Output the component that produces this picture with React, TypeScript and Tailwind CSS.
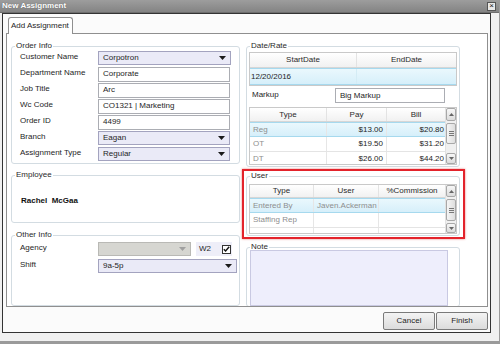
import React from "react";

const ui = "font-['Liberation_Sans',Arial,sans-serif] text-[8px] leading-[10px] text-[#1e1e1e]";

function DownArrow({ color = "#1a1a1a" }: { color?: string }) {
  return (
    <svg width="7" height="4" viewBox="0 0 7 4">
      <path d="M0 0H7L3.5 4Z" fill={color} />
    </svg>
  );
}

function SmallArrow({ up }: { up?: boolean }) {
  return (
    <svg width="5" height="3" viewBox="0 0 5 3">
      <path d={up ? "M0 3H5L2.5 0Z" : "M0 0H5L2.5 3Z"} fill="#666" />
    </svg>
  );
}

function Dropdown({ value, className }: { value: string; className: string }) {
  return (
    <div className={`${className} h-[14px] flex items-center justify-between pl-[4px] pr-[4px] bg-[#eaeaf7] border border-[#a3a3bf]`}>
      <span>{value}</span>
      <DownArrow />
    </div>
  );
}

function TextBox({ value, className }: { value: string; className: string }) {
  return (
    <div className={`${className} h-[15px] flex items-center pl-[4px] bg-white border border-[#abadb3]`}>
      <span>{value}</span>
    </div>
  );
}

function Group({ title, className, children }: { title: string; className: string; children: React.ReactNode }) {
  return (
    <fieldset className={`${className} p-0 m-0 border border-[#d3dce2] rounded-[3px] min-w-0`}>
      <legend className="ml-[3px] px-[1px] leading-[10px] text-[#2a2a2a]">{title}</legend>
      {children}
    </fieldset>
  );
}

function VScroll({ up, thumbTop, thumbH, down }: { up: number; thumbTop: number; thumbH: number; down: number }) {
  return (
    <div className="w-[11px] h-full flex flex-col bg-[#f0f0f0] border-l border-[#e2e2e2]">
      <div style={{ height: up }} className="flex items-center justify-center bg-gradient-to-b from-[#f7f7f7] to-[#dcdcdc] border border-[#a8a8a8] rounded-[2px]">
        <SmallArrow up />
      </div>
      <div className="flex-1 flex flex-col">
        <div style={{ marginTop: thumbTop, height: thumbH }} className="flex flex-col items-center justify-center gap-[1px] bg-gradient-to-r from-[#f5f5f5] to-[#dedede] border border-[#a8a8a8] rounded-[2px]">
          <div className="w-[5px] h-px bg-[#777]" />
          <div className="w-[5px] h-px bg-[#777]" />
          <div className="w-[5px] h-px bg-[#777]" />
        </div>
      </div>
      <div style={{ height: down }} className="flex items-center justify-center bg-gradient-to-b from-[#f7f7f7] to-[#dcdcdc] border border-[#a8a8a8] rounded-[2px]">
        <SmallArrow />
      </div>
    </div>
  );
}

const headCell = "flex items-center justify-center border-r border-[#e3e3e3] text-[#2a2a2a]";
const selRow = "bg-gradient-to-b from-[#eaf8fd] to-[#d6effa] border-y border-[#a6d9ee]";
const row = "bg-white border-b border-[#e4e4e4]";

function DateGrid() {
  return (
    <div className="w-[208px] border border-[#c9c9c9] bg-white">
      <div className="grid grid-cols-[107px_99px] h-[15px] border-b border-[#d6d6d6] bg-gradient-to-b from-white to-[#f1f1f1]">
        <div className={headCell}>StartDate</div>
        <div className="flex items-center justify-center text-[#2a2a2a]">EndDate</div>
      </div>
      <div className={`grid grid-cols-[107px_99px] h-[17px] ${selRow}`}>
        <div className="flex items-center pl-[1px] border-r border-[#d4ecf5]">12/20/2016</div>
        <div />
      </div>
    </div>
  );
}

function RateGrid() {
  const rows = [
    ["Reg", "$13.00", "$20.80"],
    ["OT", "$19.50", "$31.20"],
    ["DT", "$26.00", "$44.20"],
  ];
  return (
    <div className="w-[208px] h-[58px] border border-[#c9c9c9] bg-white flex overflow-hidden">
      <div className="w-[195px] flex flex-col">
        <div className="grid grid-cols-[77px_60px_58px] h-[14px] shrink-0 border-b border-[#d6d6d6] bg-gradient-to-b from-white to-[#f1f1f1]">
          <div className={headCell}>Type</div>
          <div className={headCell}>Pay</div>
          <div className="flex items-center justify-center text-[#2a2a2a]">Bill</div>
        </div>
        {rows.map((r, i) => (
          <div key={r[0]} className={`grid grid-cols-[77px_60px_58px] h-[15px] shrink-0 ${i === 0 ? selRow : row}`}>
            <div className="flex items-center pl-[3px] text-[#8e8e8e] border-r border-[#e6e6e6]">{r[0]}</div>
            <div className="flex items-center justify-end pr-[3px] border-r border-[#e6e6e6]">{r[1]}</div>
            <div className="flex items-center justify-end pr-[1px]">{r[2]}</div>
          </div>
        ))}
      </div>
      <VScroll up={13} thumbTop={2} thumbH={21} down={11} />
    </div>
  );
}

function UserGrid() {
  const rows = [
    ["Entered By", "Javen.Ackerman"],
    ["Staffing Rep", ""],
    ["", ""],
  ];
  return (
    <div className="w-[208px] h-[50px] border border-[#c9c9c9] bg-white flex overflow-hidden">
      <div className="w-[195px] flex flex-col">
        <div className="grid grid-cols-[64px_65px_66px] h-[13px] shrink-0 border-b border-[#d6d6d6] bg-gradient-to-b from-white to-[#f1f1f1]">
          <div className={headCell}>Type</div>
          <div className={headCell}>User</div>
          <div className="flex items-center justify-center text-[#2a2a2a]">%Commission</div>
        </div>
        {rows.map((r, i) => (
          <div key={i} className={`grid grid-cols-[64px_65px_66px] h-[15px] shrink-0 ${i === 0 ? selRow : row}`}>
            <div className="flex items-center pl-[3px] text-[#8e8e8e] border-r border-[#e6e6e6]">{r[0]}</div>
            <div className="flex items-center pl-[3px] text-[#8e8e8e] border-r border-[#e6e6e6]">{r[1]}</div>
            <div />
          </div>
        ))}
      </div>
      <VScroll up={12} thumbTop={2} thumbH={22} down={10} />
    </div>
  );
}

function FieldRow({ label, children }: { label: string; children: React.ReactNode }) {
  return (
    <div className="flex items-center h-[14px]">
      <div className="w-[78px] -mt-[2px]">{label}</div>
      {children}
    </div>
  );
}

function Button({ label }: { label: string }) {
  return (
    <div className="w-[52px] h-[18px] flex items-center justify-center bg-gradient-to-b from-[#f4f4f4] to-[#dcdcdc] border border-[#7a7a7a] rounded-[2px] text-[#1e1e1e]">
      {label}
    </div>
  );
}

export default function App() {
  return (
    <div className={`${ui} w-[500px] h-[344px] bg-[#f0f0f0] flex flex-col border-r border-b-[3px] border-[#9a9a9a] overflow-hidden`}>
      {/* Title bar */}
      <div className="h-[13px] shrink-0 flex items-center justify-between pl-[2px] pr-[3px] bg-gradient-to-b from-[#9d9d9d] to-[#848484] border-b border-[#6e6e6e]">
        <span className="font-bold text-white [text-shadow:0_0_1px_#555]">New Assignment</span>
        <div className="w-[9px] h-[9px] flex items-center justify-center bg-[#e9e9e9] border border-[#555] text-[8px] leading-[8px] text-[#111]">×</div>
      </div>
      <div className="flex pl-[2px]">
        {/* Frame */}
        <div className="w-[489px] h-[320px] border border-[#333] bg-[#fbfbfb] flex flex-col">
          {/* tab header */}
          <div className="h-[19px] shrink-0 flex items-end pl-[5px]">
            <div className="relative z-10 -mb-px h-[17px] w-[65px] pl-[2px] flex items-center bg-white border border-b-0 border-[#8f8f8f] rounded-t-[3px]">
              Add Assignment
            </div>
          </div>
          {/* panel */}
          <div className="ml-[3px] w-[482px] h-[274px] shrink-0 border border-[#8f8f8f] bg-white overflow-hidden flex gap-[6px] pl-[4px]">
            {/* left column */}
            <div className="w-[229px] flex flex-col">
              <Group title="Order Info" className="mt-[7px] w-[229px]">
                <div className="pl-[8px] pb-[2px] flex flex-col gap-[2px]">
                  <FieldRow label="Customer Name"><Dropdown value="Corpotron" className="w-[133px]" /></FieldRow>
                  <FieldRow label="Department Name"><TextBox value="Corporate" className="w-[132px]" /></FieldRow>
                  <FieldRow label="Job Title"><TextBox value="Arc" className="w-[132px]" /></FieldRow>
                  <FieldRow label="Wc Code"><TextBox value="CO1321 | Marketing" className="w-[132px]" /></FieldRow>
                  <FieldRow label="Order ID"><TextBox value="4499" className="w-[132px]" /></FieldRow>
                  <FieldRow label="Branch"><Dropdown value="Eagan" className="w-[132px]" /></FieldRow>
                  <FieldRow label="Assignment Type"><Dropdown value="Regular" className="w-[132px]" /></FieldRow>
                </div>
              </Group>
              <Group title="Employee" className="mt-[6px] w-[229px] h-[63px]">
                <div className="pl-[9px] pt-[16px] font-bold text-[#111]">Rachel&nbsp; McGaa</div>
              </Group>
              <Group title="Other Info" className="mt-[7px] w-[229px] h-[90px]">
                <div className="pl-[8px] pt-[2px] flex flex-col gap-[3px]">
                  <FieldRow label="Agency">
                    <div className="w-[93px] h-[14px] flex items-center justify-end pr-[4px] bg-[#d6d6d1] border border-[#b9b9b5]">
                      <DownArrow color="#a0a0a0" />
                    </div>
                    <div className="ml-[5px] w-[36px] h-[14px] flex items-center justify-between pl-[3px] pr-[1px] bg-[#eeeef8]">
                      <span>W2</span>
                      <div className="w-[9px] h-[9px] bg-white border border-[#333] flex items-center justify-center">
                        <svg width="7" height="6" viewBox="0 0 7 6">
                          <path d="M0.8 3.2L2.6 5L6.2 0.8" stroke="#111" strokeWidth="1.4" fill="none" />
                        </svg>
                      </div>
                    </div>
                  </FieldRow>
                  <FieldRow label="Shift"><Dropdown value="9a-5p" className="w-[139px]" /></FieldRow>
                </div>
              </Group>
            </div>
            {/* right column */}
            <div className="w-[214px] flex flex-col">
              <Group title="Date/Rate" className="mt-[7px] w-[214px]">
                <div className="px-[2px] pt-[1px] pb-[1px] flex flex-col">
                  <DateGrid />
                  <div className="mt-[2px] flex items-center h-[15px] pl-[3px]">
                    <div className="w-[83px] -mt-[2px]">Markup</div>
                    <TextBox value="Big Markup" className="w-[110px]" />
                  </div>
                  <div className="mt-[4px]">
                    <RateGrid />
                  </div>
                </div>
              </Group>
              <div className="mt-[2px] -ml-[4px] w-[223px] border-2 border-[#e3232b] shadow-[0_0_2px_rgba(220,30,30,0.6)] pl-[2px] pb-[1px]">
                <Group title="User" className="w-[214px]">
                  <div className="px-[2px] pt-[3px] pb-[1px]">
                    <UserGrid />
                  </div>
                </Group>
              </div>
              <Group title="Note" className="mt-[3px] w-[214px] h-[90px]">
                <div className="pl-[3px] -mt-[2px]">
                  <div className="w-[198px] h-[56px] bg-[#eeeefc] border border-[#c9c9e2]" />
                </div>
              </Group>
            </div>
          </div>
          {/* buttons */}
          <div className="mt-[5px] flex justify-end gap-[1px] pr-[2px]">
            <Button label="Cancel" />
            <Button label="Finish" />
          </div>
        </div>
      </div>
    </div>
  );
}
